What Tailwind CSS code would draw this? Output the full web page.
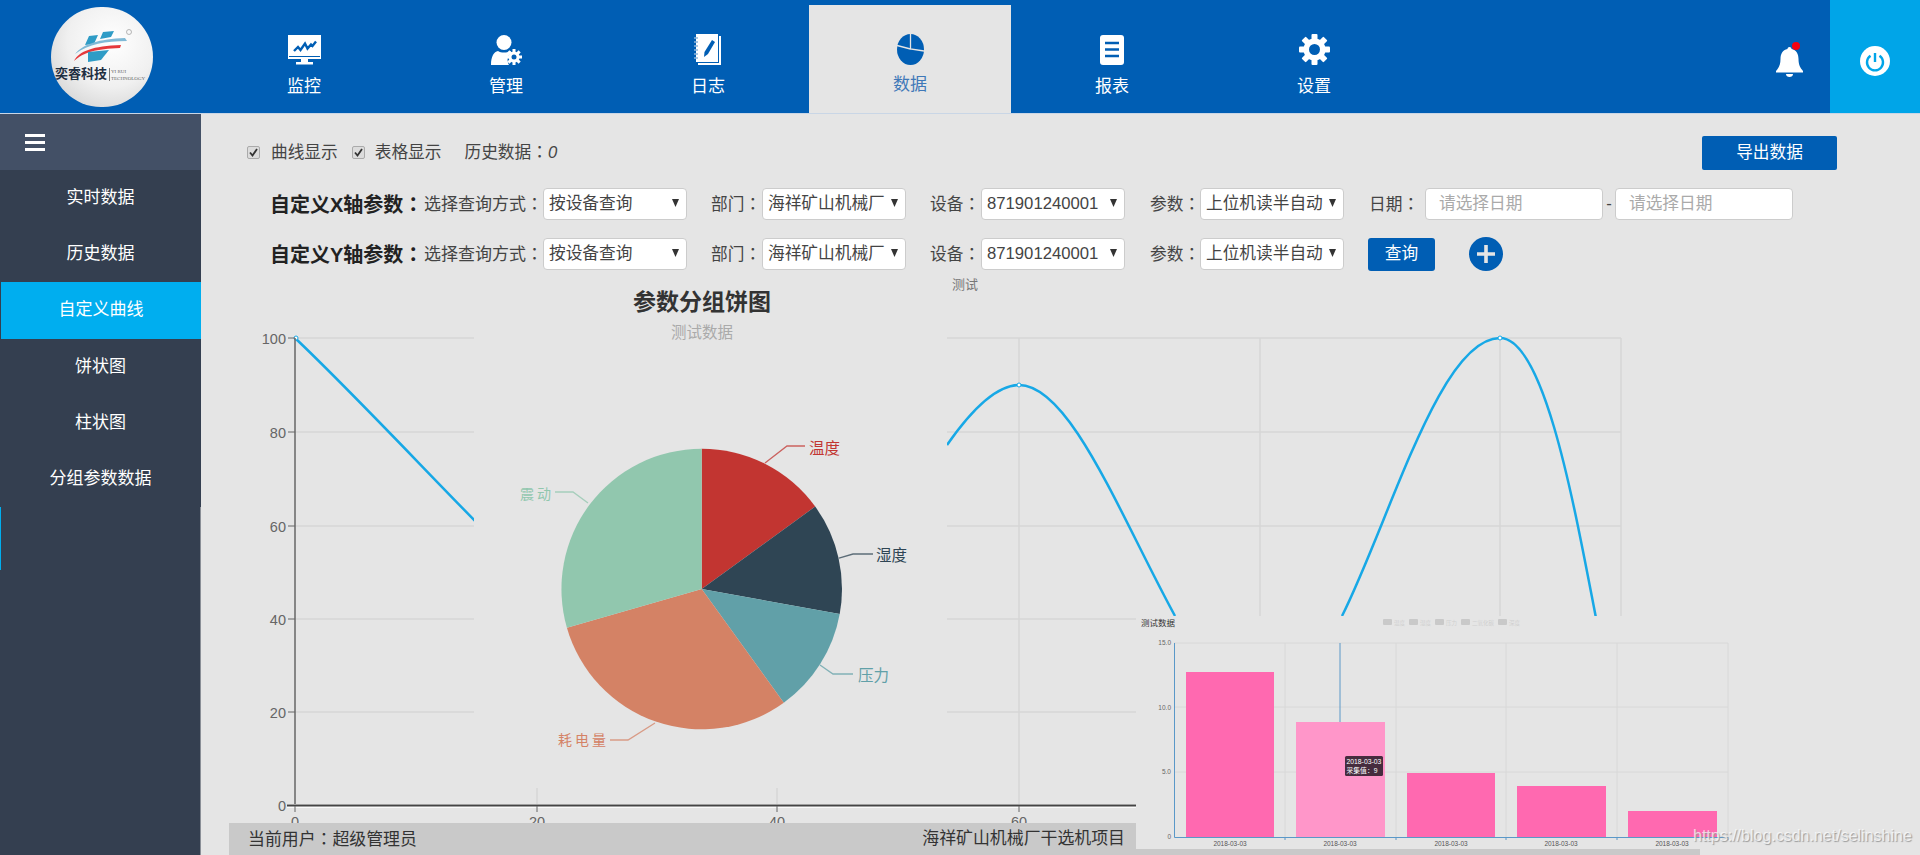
<!DOCTYPE html>
<html lang="zh"><head><meta charset="utf-8"><title>数据</title>
<script src="https://cdn.jsdelivr.net/npm/@tailwindcss/browser@4"></script></head>
<body class="bg-[#e5e5e5] font-['Liberation_Sans','Noto_Sans_CJK_SC',sans-serif] text-[16.7px] text-[#444]">
<div class="relative w-[1920px] h-[855px] overflow-hidden flex flex-col">

<header class="h-[114px] shrink-0 bg-[#005eb4] border-b border-[#c9d6e6] flex relative">
  <div class="w-[203px] pl-[51px] pt-[7px]">
    <div class="w-[102px] h-[100px] rounded-full bg-[radial-gradient(circle_at_60%_35%,#ffffff,#f0f0f0_50%,#c9c9c9)] relative overflow-hidden">
      <svg class="absolute left-0 top-0" width="102" height="100" viewBox="0 0 102 100">
        <path d="M52 25l11-1-3 6-11 2zM38 29l9-1-4 9-9 1z" fill="#2f9cc6"/>
        <path d="M24 47c8-10 24-15 50-16l2 3c-22 0-38 3-52 13z" fill="#7fb9d6"/>
        <path d="M23 54c5-10 19-15 47-16l-1 3c-24 1-36 4-46 13z" fill="#e5383b"/>
        <path d="M37 45l21-2-8 10-13 2z" fill="#2f9cc6"/>
        <circle cx="78" cy="25" r="2.5" fill="none" stroke="#999" stroke-width=".7"/>
      </svg>
      <span class="absolute left-[4px] top-[59px] text-[13px] leading-[16px] font-bold text-[#1f2f42] whitespace-nowrap">奕睿科技</span>
      <span class="absolute left-[58px] top-[61px] h-[13px] w-px bg-[#777]"></span>
      <span class="absolute left-[60px] top-[61px] text-[5px] leading-[7px] text-[#666] font-['Liberation_Serif',serif] whitespace-nowrap">YI RUI<br>TECHNOLOGY</span>
    </div>
  </div>
  <nav class="flex h-[113px] text-white text-[17px]">
    <a class="w-[202px] flex flex-col items-center pt-[35px]">
      <svg class="h-[30px]" width="33" height="30" viewBox="0 0 33 30"><path d="M0 0h33v24H20v3h5v2.500H8V27h5v-3H0z" fill="#fff"/><path d="M1 21.500h31" stroke="#005eb4"/><path d="M6 16l4-4 2.500 3L17 8.500l2.500 5 3.500-4 1.500 1.500 3.500-4.500" fill="none" stroke="#005eb4" stroke-width="2.400"/></svg>
      <span class="mt-[10px] leading-[24px]">监控</span></a>
    <a class="w-[202px] flex flex-col items-center pt-[35px]">
      <svg class="h-[30px]" width="32" height="30" viewBox="0 0 32 30"><circle cx="14" cy="7.500" r="7.500" fill="#fff"/><path d="M1 30c0-9 3-13 7-14 3 2 9 2 12 0l2 1.500c-4 2-6 7-3 12.500z" fill="#fff"/><g fill="#fff"><circle cx="24" cy="22" r="5.500"/><path d="M22.500 14h3v16h-3zM16 20.500h16v3H16z"/><path d="M22.500 14h3v16h-3z" transform="rotate(45 24 22)"/><path d="M22.500 14h3v16h-3z" transform="rotate(-45 24 22)"/></g><circle cx="24" cy="22" r="2.500" fill="#005eb4"/></svg>
      <span class="mt-[10px] leading-[24px]">管理</span></a>
    <a class="w-[202px] flex flex-col items-center pt-[34px]">
      <svg class="h-[31px]" width="28" height="31" viewBox="0 0 28 31"><path d="M25 2h2v29H4v-2h21z" fill="#fff"/><path d="M2 0h22v28H2z" fill="#fff"/><path d="M0 4h4M0 8h4M0 12h4M0 16h4M0 20h4M0 24h4" stroke="#8fb6dc" stroke-width="1.500"/><path d="M18 6l3 2-7 12-4 3 .5-5z" fill="#005eb4"/></svg>
      <span class="mt-[10px] leading-[24px]">日志</span></a>
    <a class="w-[202px] mt-[5px] bg-[#e5e5e5] text-[#3f78b8] flex flex-col items-center pt-[29px] h-[108px]">
      <svg class="h-[31px]" width="27" height="31" viewBox="0 0 27 31"><ellipse cx="13.500" cy="15.500" rx="13.500" ry="15.500" fill="#005eb4"/><path d="M13.500 0v15l13.500 2M13.500 15L0 11.500" fill="none" stroke="#e5e5e5" stroke-width="1.300"/></svg>
      <span class="mt-[8px] leading-[24px]">数据</span></a>
    <a class="w-[202px] flex flex-col items-center pt-[35px]">
      <svg class="h-[30px]" width="24" height="30" viewBox="0 0 24 30"><rect width="24" height="30" rx="3" fill="#fff"/><path d="M5 8h14M5 14.500h14M5 21h14" stroke="#005eb4" stroke-width="2.500"/></svg>
      <span class="mt-[10px] leading-[24px]">报表</span></a>
    <a class="w-[202px] flex flex-col items-center pt-[34px]">
      <svg class="h-[31px]" width="31" height="31" viewBox="0 0 31 31"><g fill="#fff"><rect x="12.500" y="0" width="6" height="31" rx="1"/><rect x="12.500" y="0" width="6" height="31" rx="1" transform="rotate(45 15.500 15.500)"/><rect x="12.500" y="0" width="6" height="31" rx="1" transform="rotate(90 15.500 15.500)"/><rect x="12.500" y="0" width="6" height="31" rx="1" transform="rotate(135 15.500 15.500)"/></g><circle cx="15.500" cy="15.500" r="11" fill="#fff"/><circle cx="15.500" cy="15.500" r="5.500" fill="#005eb4"/></svg>
      <span class="mt-[10px] leading-[24px]">设置</span></a>
  </nav>
  <div class="flex-1 flex justify-end">
    <div class="relative w-[27px] h-[30px] mt-[47px] mr-[27px]">
      <svg width="27" height="30" viewBox="0 0 27 30"><path d="M13.500 0c1.500 0 2 1 2 2 5 1 7 5 7 10 0 6 2 9 4.500 12v1.500H0V24c2.500-3 4.500-6 4.500-12 0-5 2-9 7-10 0-1 .5-2 2-2z" fill="#fff"/><path d="M10 27h7c0 2-1.500 3-3.500 3S10 29 10 27z" fill="#fff"/></svg>
      <span class="absolute right-[3px] top-[-5px] w-[8px] h-[8px] rounded-full bg-[#f5000f]"></span>
    </div>
    <div class="w-[90px] h-[113px] bg-[#00a5e8] flex items-center justify-center pt-[9px]">
      <svg width="30" height="30" viewBox="0 0 30 30"><circle cx="15" cy="15" r="15" fill="#fff"/><path d="M10.500 9.800a8 8 0 1 0 9 0" fill="none" stroke="#00a5e8" stroke-width="2.400"/><path d="M15 7v9" stroke="#00a5e8" stroke-width="2.400"/></svg>
    </div>
  </div>
</header>

<div class="flex flex-1 min-h-0">
  <aside class="w-[201px] shrink-0 bg-[#343f50] text-white text-[17px] text-center relative">
    <div class="h-[56px] bg-[#435066] flex flex-col gap-[4px] justify-center pl-[25px]">
      <span class="block w-[20px] h-[3px] bg-white"></span><span class="block w-[20px] h-[3px] bg-white"></span><span class="block w-[20px] h-[3px] bg-white"></span>
    </div>
    <a class="block h-[56.200px] leading-[56px]">实时数据</a>
    <a class="block h-[56.200px] leading-[56px]">历史数据</a>
    <a class="block h-[56.200px] leading-[56px] ml-px bg-[#00aeef]">自定义曲线</a>
    <a class="block h-[56.200px] leading-[56px]">饼状图</a>
    <a class="block h-[56.200px] leading-[56px]">柱状图</a>
    <a class="block h-[56.200px] leading-[56px]">分组参数数据</a>
    <span class="absolute left-0 top-[393px] w-px h-[63px] bg-[#00aeef]"></span>
    <span class="absolute right-0 top-[393px] bottom-0 w-px bg-[#8a8f97]"></span>
  </aside>

  <main class="flex-1 relative flex flex-col">
    <svg class="absolute left-0 top-0" width="1719" height="741" viewBox="201 114 1719 741" font-family="Liberation Sans, Noto Sans CJK SC, sans-serif">
      <g stroke="#d6d6d6" stroke-width="1.500" fill="none">
        <path d="M295 338H1621M295 432H1621M295 526H1621M295 619H1621M295 712H1136"/>
        <path d="M537 338V805M777 338V805M1019 338V805M1260 338V805M1500 338V805M1621 338V805"/>
      </g>
      <path d="M295 338C350 390 420 465 480 526" fill="none" stroke="#17a8e6" stroke-width="2.500"/>
      <path d="M947 445C970 412 995 385 1019 385C1070 385 1120 515 1175 616M1342 616C1390 520 1440 338 1500 338C1545 338 1575 510 1596 618" fill="none" stroke="#17a8e6" stroke-width="2.500"/>
      <circle cx="1019" cy="385" r="2" fill="#fff" stroke="#17a8e6"/><circle cx="1500" cy="338" r="2" fill="#fff" stroke="#17a8e6"/><circle cx="296" cy="338" r="2" fill="#fff" stroke="#17a8e6"/>
      <rect x="474" y="270" width="473" height="518" fill="#e5e5e5"/>
      <path d="M295 338V805" stroke="#666" stroke-width="1.500"/>
      <path d="M287 806H1136" stroke="#fafafa" stroke-width="4"/>
      <path d="M287 805.500H1136" stroke="#444" stroke-width="2"/>
      <path d="M288 338h7M288 432h7M288 526h7M288 619h7M288 712h7M295 806v6M537 806v6M777 806v6M1019 806v6" stroke="#666"/>
      <g fill="#666" font-size="14.500" text-anchor="end">
        <text x="286" y="344">100</text><text x="286" y="438">80</text><text x="286" y="532">60</text><text x="286" y="625">40</text><text x="286" y="718">20</text><text x="286" y="811">0</text>
      </g>
      <g fill="#666" font-size="14.500" text-anchor="middle">
        <text x="295" y="827">0</text><text x="537" y="827">20</text><text x="777" y="827">40</text><text x="1019" y="827">60</text>
      </g>
      <text x="965" y="289" font-size="13" text-anchor="middle" fill="#777">测试</text>
      <text x="702" y="310" font-size="23" font-weight="700" text-anchor="middle" fill="#333">参数分组饼图</text>
      <text x="702" y="338" font-size="15.500" text-anchor="middle" fill="#aaa">测试数据</text>
      <path d="M701.700 589V448.700A140.300 140.300 0 0 1 815.200 506.500Z" fill="#c23531"/>
      <path d="M701.700 589L815.200 506.500A140.300 140.300 0 0 1 839.700 614.100Z" fill="#2f4554"/>
      <path d="M701.700 589L839.700 614.100A140.300 140.300 0 0 1 783.800 702.800Z" fill="#61a0a8"/>
      <path d="M701.700 589L783.800 702.800A140.300 140.300 0 0 1 566.900 627.700Z" fill="#d48265"/>
      <path d="M701.700 589L566.900 627.700A140.300 140.300 0 0 1 701.700 448.700Z" fill="#91c7ae"/>
      <g fill="none" stroke-width="1.300" opacity=".75">
        <path d="M765 463L787 446H805" stroke="#c23531"/>
        <path d="M839 558L853 554H873" stroke="#2f4554"/>
        <path d="M820 665L833 674H853" stroke="#61a0a8"/>
        <path d="M655 723L628 740H610" stroke="#d48265"/>
        <path d="M588 503L573 492H555" stroke="#91c7ae"/>
      </g>
      <g font-size="15.500">
        <text x="809" y="454" fill="#c23531">温度</text>
        <text x="876" y="561" fill="#2f4554">湿度</text>
        <text x="858" y="681" fill="#61a0a8">压力</text>
        <text x="558" y="745" fill="#d48265" font-size="14" letter-spacing="3">耗电量</text>
        <text x="520" y="499" fill="#91c7ae" font-size="14" letter-spacing="3">震动</text>
      </g>
    </svg>

    <div class="relative z-10 flex items-center h-[35px] mt-[21px] pl-[46px] pr-[83px]">
      <span class="w-[13px] h-[13px] rounded-[2px] bg-[#dcdcdc] border border-[#aaa] flex items-center justify-center"><svg width="9" height="9" viewBox="0 0 9 9"><path d="M1 4.500l2.500 3L8 1" fill="none" stroke="#333" stroke-width="1.800"/></svg></span>
      <span class="ml-[11px]">曲线显示</span>
      <span class="ml-[14px] w-[13px] h-[13px] rounded-[2px] bg-[#dcdcdc] border border-[#aaa] flex items-center justify-center"><svg width="9" height="9" viewBox="0 0 9 9"><path d="M1 4.500l2.500 3L8 1" fill="none" stroke="#333" stroke-width="1.800"/></svg></span>
      <span class="ml-[10px]">表格显示</span>
      <span class="ml-[23px]">历史数据<span lang="zh-TW" class="font-['Noto_Sans_CJK_TC']">：</span><i>0</i></span>
      <button class="ml-auto w-[135px] h-[34px] rounded-[2px] bg-[#005eb4] text-white text-[16.700px]">导出数据</button>
    </div>

    <div class="relative z-10 flex items-center h-[32px] mt-[18px] pl-[69px]">
      <b class="w-[154px] text-[20px] text-[#222] whitespace-nowrap">自定义X轴参数<span lang="zh-TW" class="font-['Noto_Sans_CJK_TC']">：</span></b>
      <span class="w-[119px] text-[17px] whitespace-nowrap">选择查询方式<span lang="zh-TW" class="font-['Noto_Sans_CJK_TC']">：</span></span>
      <div class="relative w-[144px] h-[32px]"><select class="appearance-none w-full h-full bg-white border border-[#ccc] rounded-[4px] pl-[5px] pr-[14px] outline-none"><option>按设备查询</option></select><svg class="absolute right-[8px] top-[11px]" width="7" height="8" viewBox="0 0 9 10" preserveAspectRatio="none"><path d="M0 0h9L4.500 10z" fill="#333"/></svg></div>
      <span class="ml-[24px] w-[51px] whitespace-nowrap">部门<span lang="zh-TW" class="font-['Noto_Sans_CJK_TC']">：</span></span>
      <div class="relative w-[144px] h-[32px]"><select class="appearance-none w-full h-full bg-white border border-[#ccc] rounded-[4px] pl-[5px] pr-[14px] outline-none"><option>海祥矿山机械厂</option></select><svg class="absolute right-[8px] top-[11px]" width="7" height="8" viewBox="0 0 9 10" preserveAspectRatio="none"><path d="M0 0h9L4.500 10z" fill="#333"/></svg></div>
      <span class="ml-[24px] w-[51px] whitespace-nowrap">设备<span lang="zh-TW" class="font-['Noto_Sans_CJK_TC']">：</span></span>
      <div class="relative w-[144px] h-[32px]"><select class="appearance-none w-full h-full bg-white border border-[#ccc] rounded-[4px] pl-[5px] pr-[14px] outline-none"><option>871901240001</option></select><svg class="absolute right-[8px] top-[11px]" width="7" height="8" viewBox="0 0 9 10" preserveAspectRatio="none"><path d="M0 0h9L4.500 10z" fill="#333"/></svg></div>
      <span class="ml-[25px] w-[50px] whitespace-nowrap">参数<span lang="zh-TW" class="font-['Noto_Sans_CJK_TC']">：</span></span>
      <div class="relative w-[144px] h-[32px]"><select class="appearance-none w-full h-full bg-white border border-[#ccc] rounded-[4px] pl-[5px] pr-[14px] outline-none"><option>上位机读半自动</option></select><svg class="absolute right-[8px] top-[11px]" width="7" height="8" viewBox="0 0 9 10" preserveAspectRatio="none"><path d="M0 0h9L4.500 10z" fill="#333"/></svg></div>
      <span class="ml-[25px] w-[56px] whitespace-nowrap">日期<span lang="zh-TW" class="font-['Noto_Sans_CJK_TC']">：</span></span>
      <input class="w-[178px] h-[32px] bg-white border border-[#ccc] rounded-[4px] pl-[13px] outline-none placeholder:text-[#aaa]" placeholder="请选择日期">
      <span class="w-[12px] text-center">-</span>
      <input class="w-[178px] h-[32px] bg-white border border-[#ccc] rounded-[4px] pl-[13px] outline-none placeholder:text-[#aaa]" placeholder="请选择日期">
    </div>

    <div class="relative z-10 flex items-center h-[32px] mt-[18px] pl-[69px]">
      <b class="w-[154px] text-[20px] text-[#222] whitespace-nowrap">自定义Y轴参数<span lang="zh-TW" class="font-['Noto_Sans_CJK_TC']">：</span></b>
      <span class="w-[119px] text-[17px] whitespace-nowrap">选择查询方式<span lang="zh-TW" class="font-['Noto_Sans_CJK_TC']">：</span></span>
      <div class="relative w-[144px] h-[32px]"><select class="appearance-none w-full h-full bg-white border border-[#ccc] rounded-[4px] pl-[5px] pr-[14px] outline-none"><option>按设备查询</option></select><svg class="absolute right-[8px] top-[11px]" width="7" height="8" viewBox="0 0 9 10" preserveAspectRatio="none"><path d="M0 0h9L4.500 10z" fill="#333"/></svg></div>
      <span class="ml-[24px] w-[51px] whitespace-nowrap">部门<span lang="zh-TW" class="font-['Noto_Sans_CJK_TC']">：</span></span>
      <div class="relative w-[144px] h-[32px]"><select class="appearance-none w-full h-full bg-white border border-[#ccc] rounded-[4px] pl-[5px] pr-[14px] outline-none"><option>海祥矿山机械厂</option></select><svg class="absolute right-[8px] top-[11px]" width="7" height="8" viewBox="0 0 9 10" preserveAspectRatio="none"><path d="M0 0h9L4.500 10z" fill="#333"/></svg></div>
      <span class="ml-[24px] w-[51px] whitespace-nowrap">设备<span lang="zh-TW" class="font-['Noto_Sans_CJK_TC']">：</span></span>
      <div class="relative w-[144px] h-[32px]"><select class="appearance-none w-full h-full bg-white border border-[#ccc] rounded-[4px] pl-[5px] pr-[14px] outline-none"><option>871901240001</option></select><svg class="absolute right-[8px] top-[11px]" width="7" height="8" viewBox="0 0 9 10" preserveAspectRatio="none"><path d="M0 0h9L4.500 10z" fill="#333"/></svg></div>
      <span class="ml-[25px] w-[50px] whitespace-nowrap">参数<span lang="zh-TW" class="font-['Noto_Sans_CJK_TC']">：</span></span>
      <div class="relative w-[144px] h-[32px]"><select class="appearance-none w-full h-full bg-white border border-[#ccc] rounded-[4px] pl-[5px] pr-[14px] outline-none"><option>上位机读半自动</option></select><svg class="absolute right-[8px] top-[11px]" width="7" height="8" viewBox="0 0 9 10" preserveAspectRatio="none"><path d="M0 0h9L4.500 10z" fill="#333"/></svg></div>
      <button class="ml-[24px] w-[67px] h-[33px] rounded-[3px] bg-[#005eb4] text-white">查询</button>
      <span class="ml-[34px] w-[34px] h-[34px] rounded-full bg-[#005eb4] flex items-center justify-center"><svg width="20" height="20" viewBox="0 0 20 20"><path d="M10 1v18M1 10h18" stroke="#e5e5e5" stroke-width="3.600"/></svg></span>
    </div>

    <footer class="relative z-10 mt-auto ml-[28px] w-[1471px] h-[32px] bg-[#c9c9c9] text-[#333] text-[16.900px]">
      <div class="w-[896px] h-full pl-[19px] flex items-center justify-between">
        <span>当前用户<span lang="zh-TW" class="font-['Noto_Sans_CJK_TC']">：</span>超级管理员</span>
        <span>海祥矿山机械厂干选机项目</span>
      </div>
    </footer>

    <div class="absolute z-20 left-[935px] top-[502px] w-[610px] h-[233px] bg-[#e5e5e5]">
      <svg width="610" height="233" viewBox="1136 616 610 233" font-family="Liberation Sans, Noto Sans CJK SC, sans-serif">
        <text x="1141" y="626" font-size="8.500" fill="#333">测试数据</text>
        <g fill="#c9c9c9"><rect x="1383" y="619" width="9" height="6" rx="1"/><rect x="1409" y="619" width="9" height="6" rx="1"/><rect x="1435" y="619" width="9" height="6" rx="1"/><rect x="1461" y="619" width="9" height="6" rx="1"/><rect x="1498" y="619" width="9" height="6" rx="1"/></g>
        <g fill="#d0d0d0" font-size="5.500"><text x="1394" y="624.500">温度</text><text x="1420" y="624.500">湿度</text><text x="1446" y="624.500">压力</text><text x="1472" y="624.500">二氧化碳</text><text x="1509" y="624.500">深度</text></g>
        <path d="M1174 643H1728M1174 707H1728M1174 772H1728M1285 643V837M1396 643V837M1506 643V837M1617 643V837M1728 643V837" stroke="#d8d8d8" fill="none"/>
        <rect x="1186" y="672" width="88" height="165" fill="#ff69b0"/>
        <rect x="1296" y="722" width="89" height="115" fill="#ff96c9"/>
        <rect x="1407" y="773" width="88" height="64" fill="#ff69b0"/>
        <rect x="1517" y="786" width="89" height="51" fill="#ff69b0"/>
        <rect x="1628" y="811" width="89" height="26" fill="#ff69b0"/>
        <path d="M1340 643V722" stroke="#5a98c8"/>
        <path d="M1174.500 643V837.500H1728M1285 837v3M1396 837v3M1506 837v3M1617 837v3M1728 837v3" stroke="#5a98c8" fill="none"/>
        <g fill="#666" font-size="6.500" text-anchor="end"><text x="1171" y="645">15.0</text><text x="1171" y="710">10.0</text><text x="1171" y="774">5.0</text><text x="1171" y="839">0</text></g>
        <g fill="#555" font-size="6.500" text-anchor="middle"><text x="1230" y="846">2018-03-03</text><text x="1340" y="846">2018-03-03</text><text x="1451" y="846">2018-03-03</text><text x="1561" y="846">2018-03-03</text><text x="1672" y="846">2018-03-03</text></g>
        <rect x="1345" y="756" width="38" height="20" rx="1.500" fill="#462c3e"/>
        <g fill="#fff" font-size="6.800"><text x="1346.500" y="764">2018-03-03</text><text x="1346.500" y="772.500">采集值：9</text></g>
      </svg>
    </div>
    <span class="absolute z-30 left-[1492px] top-[711px] text-[16px] leading-[22px] text-white/70 [text-shadow:1px_1px_1px_#999] whitespace-nowrap">https://blog.csdn.net/selinshine</span>
  </main>
</div>
</div>
</body></html>
